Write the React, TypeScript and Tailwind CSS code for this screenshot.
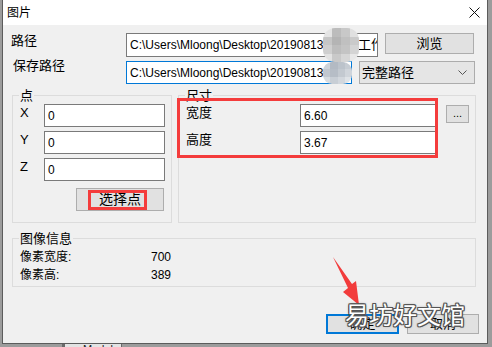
import React from "react";

const FONT = { fontFamily: '"Liberation Sans", "Noto Sans CJK SC", sans-serif' };

function Input({ w, h = 23, children, focus = false }: { w: string; h?: number; children?: React.ReactNode; focus?: boolean }) {
  return (
    <div
      className={`${w} ${h === 24 ? "h-[24px]" : "h-[23px]"} ${focus ? "border-[#0078d7]" : "border-[#7a7a7a]"} border bg-white flex items-center pl-[3px] overflow-hidden whitespace-nowrap text-[12px] text-black shrink-0`}
    >
      {children}
    </div>
  );
}

function Group({ w, h, label, children }: { w: string; h: string; label: string; children?: React.ReactNode }) {
  return (
    <div className={`${w} ${h} relative border border-[#dcdcdc] shrink-0`}>
      <div className="absolute -top-[8px] left-[6px] px-[1px] bg-[#f0f0f0] text-[13px] leading-[16px] text-black">{label}</div>
      {children}
    </div>
  );
}

const MOSAIC1 = [
  "#e4e4e4", "#bcbcbc", "#c8c8c8", "#e0e0e0",
  "#c6c6c6", "#b4b4b4", "#c0c0c0", "#cacaca",
  "#cfcfcf", "#bdbdbd", "#c4c4c4", "#d4d4d4",
  "#e2e2e2", "#c9c9c9", "#d6d6d6", "#e8e8e8",
];
const MOSAIC2 = [
  "#cdd3da", "#b3bac3", "#bcc3cb", "#c6ccd3",
  "#c1c7cf", "#b6bdc6", "#c3c9d0", "#d0d5db",
  "#d6dbe0", "#c8ced5", "#d2d7dd", "#dfe3e7",
];

export default function App() {
  return (
    <div className="w-[492px] h-[347px] bg-[#9c9c9c] relative overflow-hidden" style={FONT}>
      <div className="ml-[2px] w-[486px] h-[344px] border-l border-r border-b border-[#5c5c5c] flex flex-col bg-[#f0f0f0]">
        {/* Title bar */}
        <div className="h-[25px] bg-white flex items-center pl-[4px] shrink-0">
          <span className="text-[12px] leading-[16px] text-black">图片</span>
          <svg className="ml-auto mr-[7px]" width="11" height="11" viewBox="0 0 11 11">
            <path d="M0.5 0.5 L10.5 10.5 M10.5 0.5 L0.5 10.5" stroke="#111" strokeWidth="1" fill="none" />
          </svg>
        </div>

        {/* Body */}
        <div className="flex flex-col pt-[8px]">
          {/* Row 1 */}
          <div className="flex items-start">
            <div className="pl-[8px] w-[123px] text-[13px] leading-[16px] text-black shrink-0">路径</div>
            <Input w="w-[252px]" h={24}>
              <span className="w-[194px] shrink-0 overflow-hidden">C:\Users\Mloong\Desktop\20190813</span>
              <span className="w-[34px] shrink-0"></span>
              <span className="text-[13px]">工作室</span>
            </Input>
            <div className="ml-[7px] w-[89px] h-[21px] bg-[#e1e1e1] border border-[#adadad] flex items-center justify-center text-[13px] text-black shrink-0">
              浏览
            </div>
          </div>

          {/* Row 2 */}
          <div className="flex items-start mt-[4px]">
            <div className="pl-[10px] w-[123px] -mt-[3px] text-[13px] leading-[16px] text-black shrink-0">保存路径</div>
            <Input w="w-[226px]" focus>
              <span className="w-[194px] shrink-0 overflow-hidden">C:\Users\Mloong\Desktop\20190813</span>
            </Input>
            <div className="ml-[7px] w-[116px] h-[23px] bg-[#e5e5e5] border border-[#acacac] flex items-center pl-[2px] pr-[7px] text-[13px] text-black shrink-0">
              <span>完整路径</span>
              <svg className="ml-auto" width="9" height="5" viewBox="0 0 9 5">
                <path d="M0.5 0.5 L4.5 4.5 L8.5 0.5" stroke="#555" strokeWidth="1" fill="none" />
              </svg>
            </div>
          </div>

          {/* Groups */}
          <div className="flex items-start mt-[11px] pl-[9px]">
            <Group w="w-[160px]" h="h-[128px]" label="点">
              <div className="flex flex-col pt-[8px]">
                {["X", "Y", "Z"].map((l, i) => (
                  <div key={l} className={`flex items-start ${i > 0 ? "mt-[4px]" : ""}`}>
                    <div className="pl-[7px] w-[31px] text-[13px] leading-[16px] mt-[1px] text-black shrink-0">{l}</div>
                    <Input w="w-[121px]">0</Input>
                  </div>
                ))}
                <div className="ml-[63px] mt-[7px] w-[88px] h-[23px] bg-[#e1e1e1] border border-[#adadad] flex items-center justify-center text-[14px] text-black">
                  选择点
                </div>
              </div>
            </Group>
            <div className="ml-[6px]">
              <Group w="w-[298px]" h="h-[128px]" label="尺寸">
                <div className="flex flex-col pt-[8px]">
                  <div className="flex items-start">
                    <div className="pl-[7px] w-[121px] text-[13px] leading-[16px] mt-[1px] text-black shrink-0">宽度</div>
                    <Input w="w-[138px]">6.60</Input>
                    <div className="ml-[8px] mt-[1px] w-[23px] h-[18px] bg-[#e1e1e1] border border-[#adadad] flex items-center justify-center text-[11px] leading-[10px] text-black pb-[3px]">
                      ...
                    </div>
                  </div>
                  <div className="flex items-start mt-[4px]">
                    <div className="pl-[7px] w-[121px] text-[13px] leading-[16px] mt-[1px] text-black shrink-0">高度</div>
                    <Input w="w-[138px]">3.67</Input>
                  </div>
                </div>
              </Group>
            </div>
          </div>

          {/* Image info */}
          <div className="mt-[15px] pl-[9px]">
            <Group w="w-[464px]" h="h-[49px]" label="图像信息">
              <div className="flex flex-col pt-[9px] pl-[7px] text-[12px] leading-[18px] text-black">
                <div className="flex">
                  <span className="w-[131px]">像素宽度:</span>
                  <span>700</span>
                </div>
                <div className="flex">
                  <span className="w-[131px]">像素高:</span>
                  <span>389</span>
                </div>
              </div>
            </Group>
          </div>

          {/* Buttons */}
          <div className="flex mt-[27px] pl-[323px]">
            <div className="w-[73px] h-[20px] bg-[#e1e1e1] border-2 border-[#0078d7] flex items-center justify-center text-[13px] text-black">
              确定
            </div>
            <div className="ml-[8px] w-[72px] h-[20px] bg-[#e1e1e1] border border-[#adadad] flex items-center justify-center text-[13px] text-black">
              取消
            </div>
          </div>
        </div>
      </div>

      {/* Bottom strip */}
      <div className="absolute left-[62px] top-[344px] w-[60px] h-[10px] bg-[#e3e3e3] border-l-[3px] border-r border-[#6a6a6a] overflow-hidden">
        <div className="text-[11px] leading-[11px] pl-[18px] text-[#222]">Model</div>
      </div>

      {/* Mosaic overlays */}
      <div className="absolute left-[323px] top-[28px] w-[36px] h-[34px] rounded-[12px] overflow-hidden flex flex-wrap">
        {MOSAIC1.map((c, i) => (
          <div key={i} className="w-[9px] h-[8.5px]" style={{ backgroundColor: c }}></div>
        ))}
      </div>
      <div className="absolute left-[323px] top-[62px] w-[29px] h-[22px] rounded-[9px] overflow-hidden flex flex-wrap">
        {MOSAIC2.map((c, i) => (
          <div key={i} className="w-[7.25px] h-[7.33px]" style={{ backgroundColor: c }}></div>
        ))}
      </div>

      {/* Red highlight rectangles */}
      <div className="absolute left-[88px] top-[190px] w-[59px] h-[20px] border-[3px] border-[#f43c3c]"></div>
      <div className="absolute left-[177px] top-[98px] w-[261px] h-[60px] border-[3px] border-[#f43c3c]"></div>

      {/* Red arrow */}
      <svg className="absolute left-0 top-0" width="492" height="347" viewBox="0 0 492 347">
        <polygon points="333,257 352,284 356,281 359,305 343,292 348,288" fill="#f23c3c" />
      </svg>

      {/* Watermark */}
      <div
        className="absolute left-[345px] top-[299px] text-[24px] leading-[30px] text-white whitespace-nowrap [text-shadow:1px_1px_0_#555,-1px_-1px_0_#555,1px_-1px_0_#555,-1px_1px_0_#555,0_1px_0_#555,0_-1px_0_#555,1px_0_0_#555,-1px_0_0_#555,0_0_3px_rgba(0,0,0,0.5)]"
        style={{ fontFamily: '"Noto Sans CJK SC", sans-serif' }}
      >
        易坊好文馆
      </div>
    </div>
  );
}
